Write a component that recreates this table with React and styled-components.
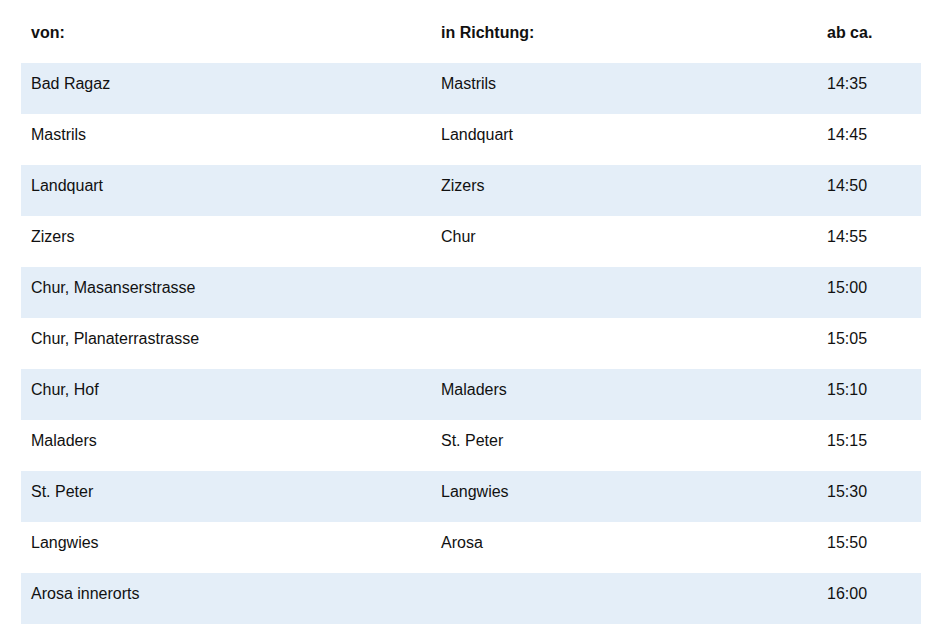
import React from "react";
import styled, { createGlobalStyle } from "styled-components";

const GlobalStyle = createGlobalStyle`
    html, body {
        margin: 0;
        padding: 0;
        background: #fff;
    }
    body {
        font-family: "Liberation Sans", Arial, sans-serif;
        color: #111;
    }
`;

const Page = styled.div`
    padding: 12px 23px 0 21px;
`;

const Table = styled.div`
    display: grid;
    grid-template-columns: 410px 386px 104px;
    width: 900px;
`;

const Row = styled.div`
    display: contents;
`;

const Cell = styled.div`
    height: 51px;
    box-sizing: border-box;
    padding: 12px 10px 0;
    font-size: 16px;
    line-height: 18px;
    font-weight: ${({ $head }) => ($head ? 700 : 400)};
    background-color: ${({ $shade }) => ($shade ? "#e4eef8" : "#fff")};
`;

const stops = [
    ["Bad Ragaz", "Mastrils", "14:35"],
    ["Mastrils", "Landquart", "14:45"],
    ["Landquart", "Zizers", "14:50"],
    ["Zizers", "Chur", "14:55"],
    ["Chur, Masanserstrasse", "", "15:00"],
    ["Chur, Planaterrastrasse", "", "15:05"],
    ["Chur, Hof", "Maladers", "15:10"],
    ["Maladers", "St. Peter", "15:15"],
    ["St. Peter", "Langwies", "15:30"],
    ["Langwies", "Arosa", "15:50"],
    ["Arosa innerorts", "", "16:00"],
];

const App = () => {
    return (
        <Page>
            <GlobalStyle />
            <Table>
                <Row>
                    <Cell $head>von:</Cell>
                    <Cell $head>in Richtung:</Cell>
                    <Cell $head>ab ca.</Cell>
                </Row>
                {stops.map(([from, to, time], i) => (
                    <Row key={from}>
                        <Cell $shade={i % 2 === 0}>{from}</Cell>
                        <Cell $shade={i % 2 === 0}>{to}</Cell>
                        <Cell $shade={i % 2 === 0}>{time}</Cell>
                    </Row>
                ))}
            </Table>
        </Page>
    );
};

export default App;
